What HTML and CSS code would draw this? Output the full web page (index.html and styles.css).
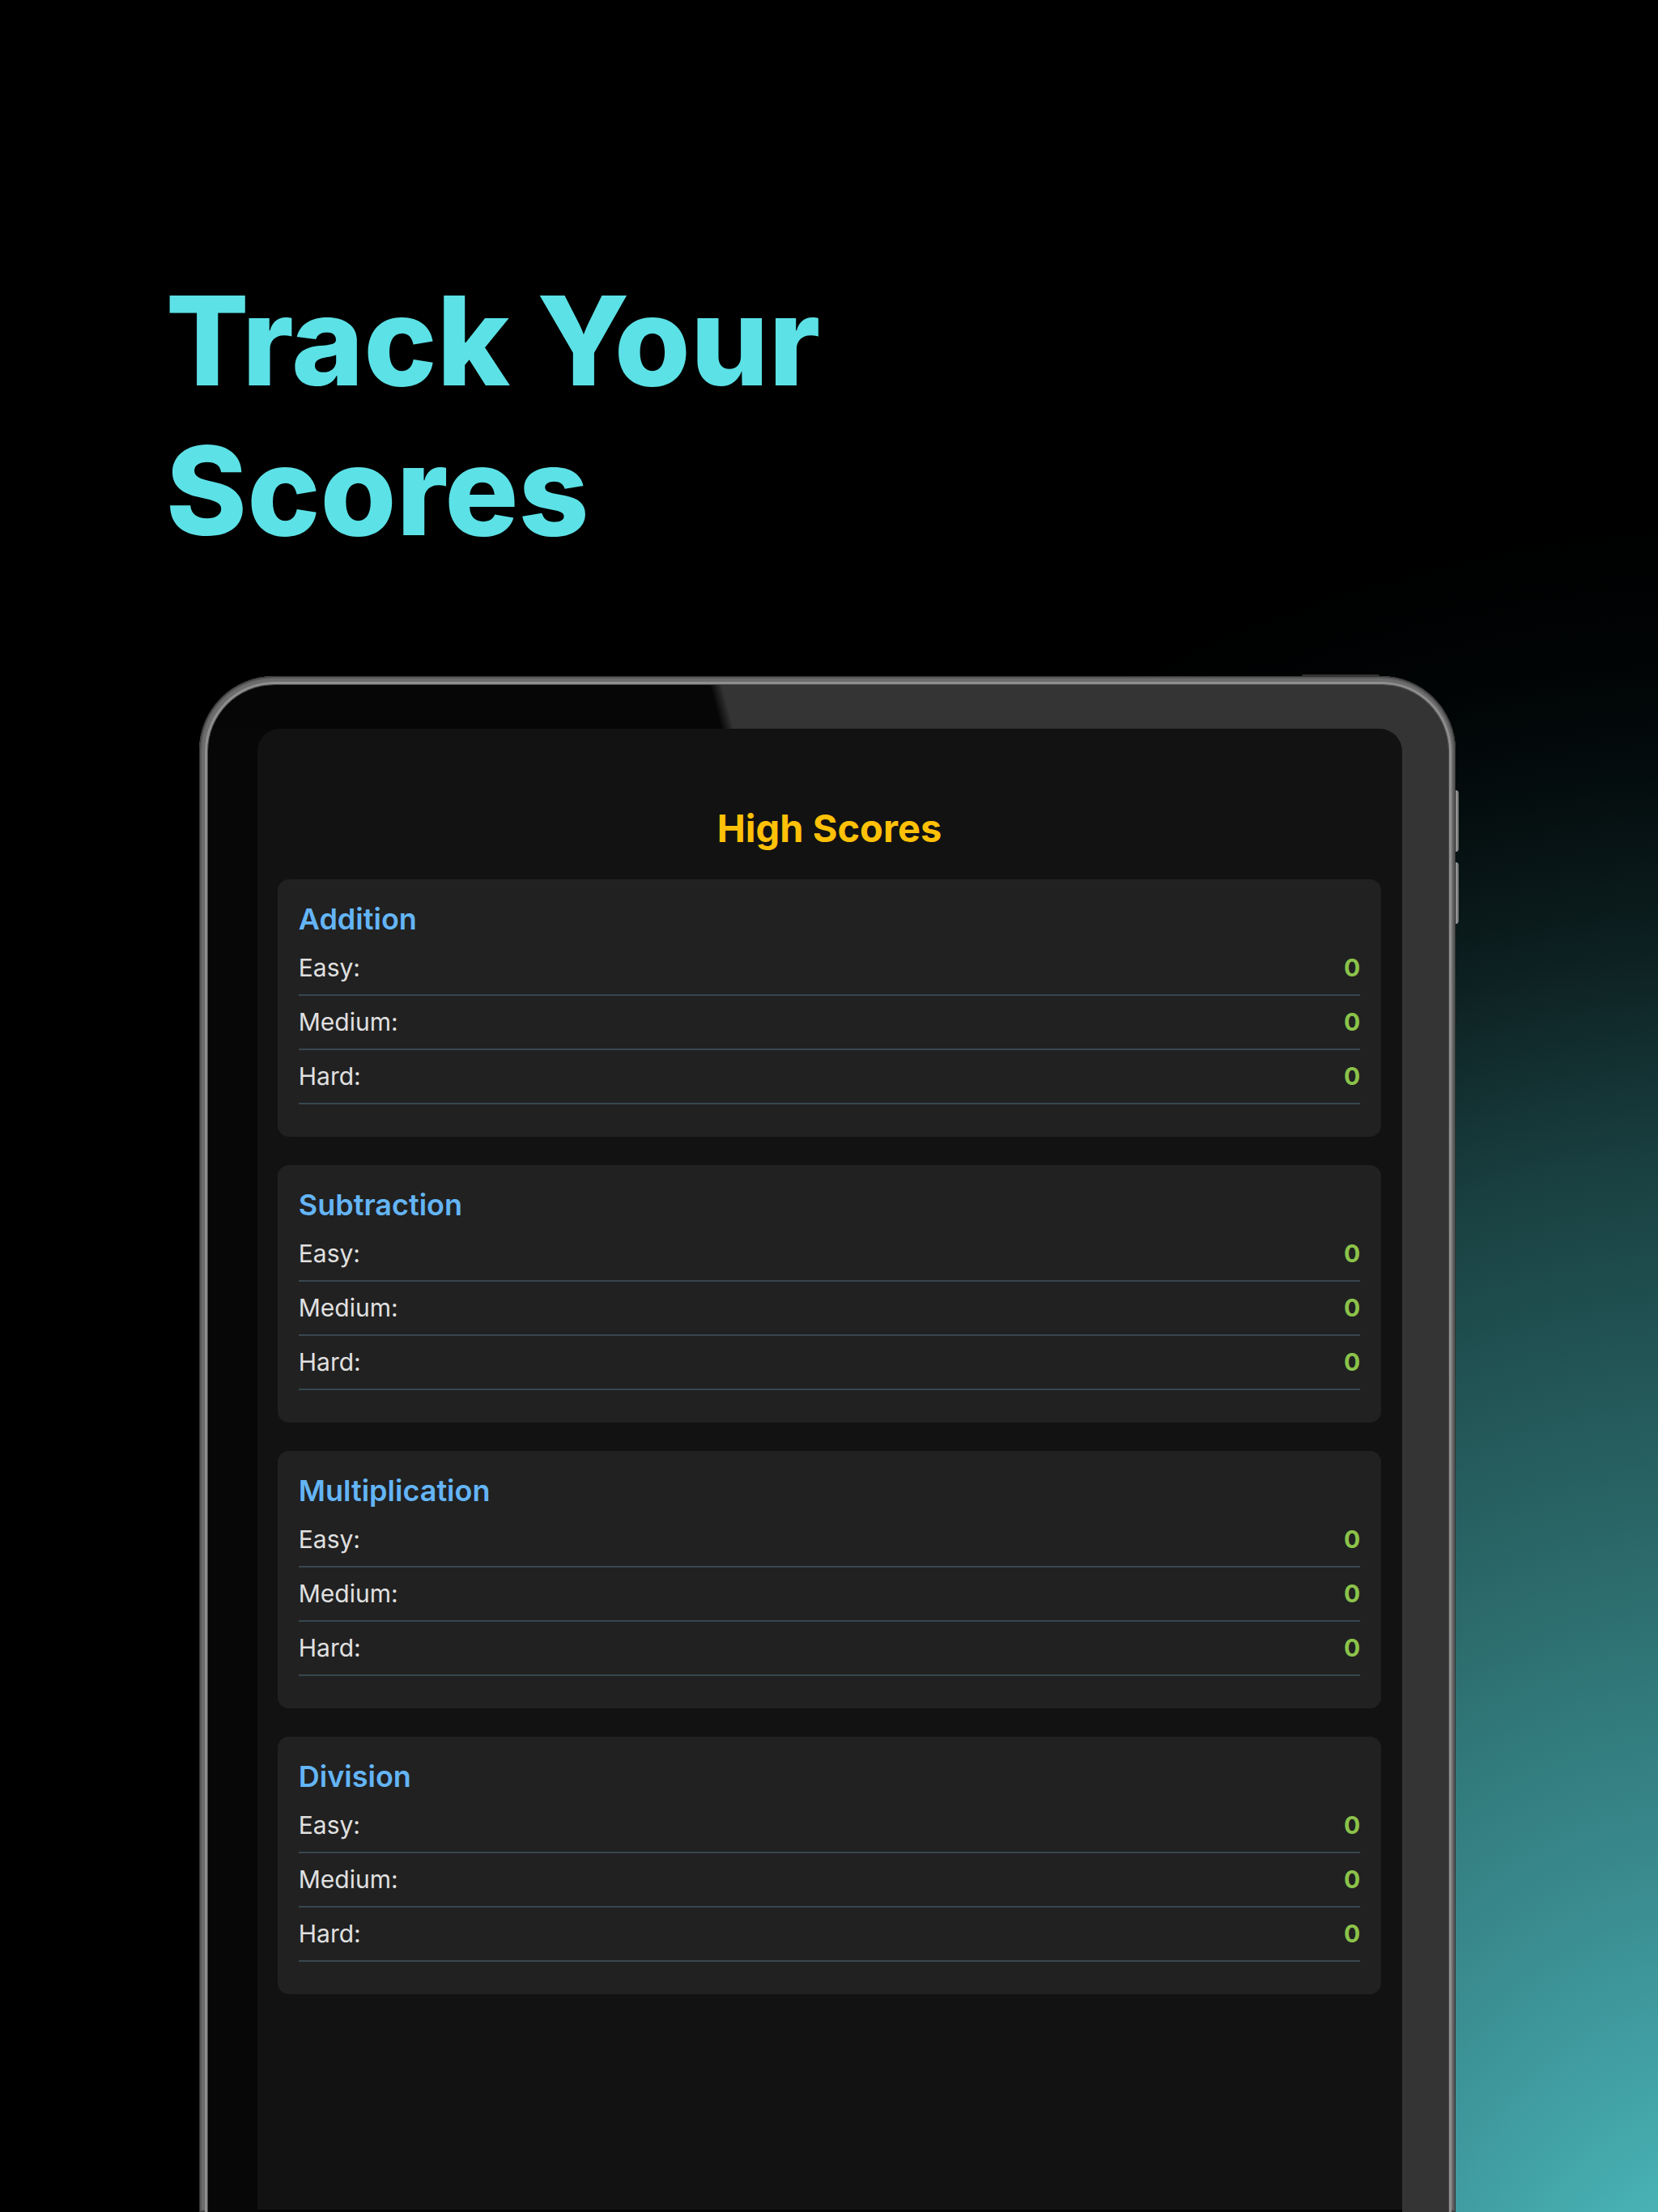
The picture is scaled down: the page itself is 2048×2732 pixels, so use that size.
FILE: index.html
```html
<!DOCTYPE html>
<html lang="en">
<head>
<meta charset="utf-8">
<meta name="viewport" content="width=device-width, initial-scale=1">
<title>Track Your Scores</title>
<link rel="stylesheet" href="styles.css">
</head>
<body>
<main class="page">
  <h1 class="headline">Track Your<br>Scores</h1>
  <div class="device">
    <span class="key key-power"></span>
    <span class="key key-up"></span>
    <span class="key key-down"></span>
    <div class="frame">
      <div class="bezel">
        <section class="screen">
          <h2 class="screen-title">High Scores</h2>
          <section class="card">
            <h3 class="card-title">Addition</h3>
            <dl class="scores">
              <div class="row"><dt>Easy:</dt><dd>0</dd></div>
              <div class="row"><dt>Medium:</dt><dd>0</dd></div>
              <div class="row"><dt>Hard:</dt><dd>0</dd></div>
            </dl>
          </section>
          <section class="card">
            <h3 class="card-title">Subtraction</h3>
            <dl class="scores">
              <div class="row"><dt>Easy:</dt><dd>0</dd></div>
              <div class="row"><dt>Medium:</dt><dd>0</dd></div>
              <div class="row"><dt>Hard:</dt><dd>0</dd></div>
            </dl>
          </section>
          <section class="card">
            <h3 class="card-title">Multiplication</h3>
            <dl class="scores">
              <div class="row"><dt>Easy:</dt><dd>0</dd></div>
              <div class="row"><dt>Medium:</dt><dd>0</dd></div>
              <div class="row"><dt>Hard:</dt><dd>0</dd></div>
            </dl>
          </section>
          <section class="card">
            <h3 class="card-title">Division</h3>
            <dl class="scores">
              <div class="row"><dt>Easy:</dt><dd>0</dd></div>
              <div class="row"><dt>Medium:</dt><dd>0</dd></div>
              <div class="row"><dt>Hard:</dt><dd>0</dd></div>
            </dl>
          </section>
        </section>
      </div>
    </div>
  </div>
</main>
</body>
</html>
```
FILE: styles.css
```css
* {
  box-sizing: border-box;
  margin: 0;
}

body {
  background: #000;
  font-family: Inter, "Liberation Sans", sans-serif;
}

.page {
  display: flex;
  flex-direction: column;
  min-height: 100vh;
  padding-top: 329px;
  overflow: hidden;
  background: radial-gradient(92% 86% at 104% 109%, #50c2c6 0%, #49b2b5 11%, #41a0a4 19%, #3a8c8f 28%, #327b7d 37%, #2a6667 47%, #215253 57%, #193f40 66%, #0d2021 77%, #091718 81%, #040d0e 86%, #010405 92%, #000 100%) #000;
}

.headline {
  padding: 0 10%;
  color: #5ce1e6;
  font-size: 152px;
  font-weight: 800;
  line-height: 185px;
}

.device {
  position: relative;
  display: flex;
  flex: 1;
  margin: 136px 12% 0;
  padding-right: 4px;
}

.frame {
  position: relative;
  display: flex;
  flex: 1;
  padding: 11px 9px 0 11px;
  border-radius: 92px 92px 0 0;
  background: #6c6c6c;
  box-shadow: inset 0 0 0 1px #333, inset 0 0 0 3px #585858;
}

/* The glare starts with a slanted edge in the top strip and covers the right side. */
.bezel {
  display: flex;
  flex: 1;
  padding: 54px 57px 0 61px;
  border-radius: 82px 82px 0 0;
  background:
    linear-gradient(75deg, #060606 41%, #343434 42%) top / 100% 54px no-repeat,
    linear-gradient(90deg, #070707 50%, #343434 50%);
  box-shadow: 0 0 0 1px #484848, 0 0 0 4px #8e8e8e;
}

.screen {
  display: flex;
  flex: 1;
  flex-direction: column;
  gap: 35px;
  padding: 90px 26px 35px 25px;
  border-bottom: 3px solid #050505;
  border-radius: 28px 28px 0 0;
  background: #121212;
}

.screen-title {
  margin-bottom: -4px;
  color: #ffc107;
  font-size: 47px;
  font-weight: 700;
  line-height: 65px;
  text-align: center;
}

.card {
  padding: 22px 26px 40px;
  border-radius: 14px;
  background: #212121;
}

.card-title {
  color: #64b5f6;
  font-size: 36px;
  font-weight: 600;
  line-height: 55px;
}

.row {
  display: flex;
  justify-content: space-between;
  padding: 14px 0;
  border-bottom: 2px solid #37474f;
  color: #e0e0e0;
  font-size: 30px;
  line-height: 37px;
}

.row dd {
  color: #8bc34a;
  font-weight: 700;
}

.key {
  position: absolute;
  background: linear-gradient(90deg, #555, #999 70%, #555);
}

.key-power {
  top: -2px;
  right: 98px;
  width: 96px;
  height: 4px;
  border-radius: 2px;
  background: #333;
}

.key-up,
.key-down {
  right: 0;
  width: 8px;
  height: 76px;
  border-radius: 4px;
}

.key-up {
  top: 141px;
}

.key-down {
  top: 230px;
}
```
